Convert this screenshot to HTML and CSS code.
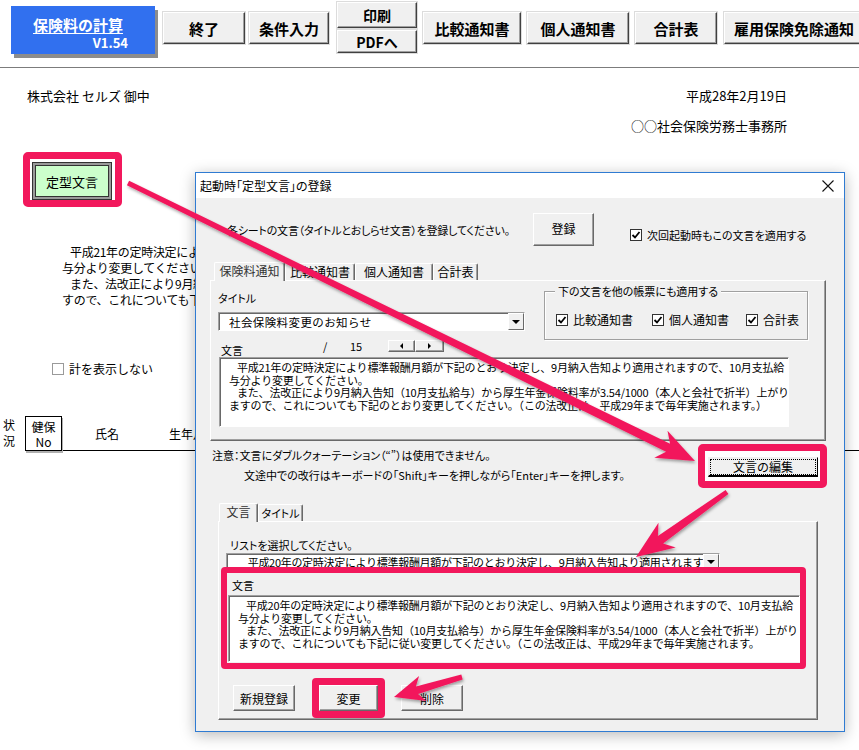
FILE: index.html
```html
<!DOCTYPE html>
<html lang="ja">
<head>
    <meta charset="UTF-8">
    <meta name="viewport" content="width=device-width, initial-scale=1.0">
    <title>保険料の計算</title>
    <link rel="stylesheet" href="styles.css">
</head>
<body>

    <!-- Sheet behind the dialog -->
    <div class="sheet">
        <div class="toolbar">
            <div class="calc-btn">
                <div class="calc-inner">
                    <div class="calc-title">保険料の計算</div>
                    <div class="calc-ver">V1.54</div>
                </div>
            </div>
            <button class="tool-btn w-end">終了</button>
            <button class="tool-btn w-cond">条件入力</button>
            <div class="print-stack">
                <button class="tool-btn print-top">印刷</button>
                <button class="tool-btn print-bottom">PDFへ</button>
            </div>
            <button class="tool-btn w-cmp">比較通知書</button>
            <button class="tool-btn w-ind">個人通知書</button>
            <button class="tool-btn w-sum">合計表</button>
            <button class="tool-btn w-emp">雇用保険免除通知</button>
        </div>

        <div class="letterhead">
            <div class="addressee">株式会社 セルズ 御中</div>
            <div class="sender">
                <div>平成28年2月19日</div>
                <div class="office">○○社会保険労務士事務所</div>
            </div>
        </div>

        <div class="hl-template"><button class="template-btn">定型文言</button></div>

        <div class="notice">
            <div class="ind">平成21年の定時決定により標準報酬月額が下記のとおり決定し、9月納入告知より適用されますので、10月支払給</div>
            <div>与分より変更してください。</div>
            <div class="ind">また、法改正により9月納入告知（10月支払給与）から厚生年金保険料率が3.54/1000（本人と会社で折半）上がりま</div>
            <div>すので、これについても下記のとおり変更してください。</div>
        </div>

        <label class="hide-total"><span class="cb cb-light"></span>計を表示しない</label>

        <div class="table-head">
            <div class="status">状<br>況</div>
            <div class="head-cols">
                <div class="no-box">健保<br>No</div>
                <div class="col-name">氏名</div>
                <div class="col-birth">生年月日</div>
            </div>
        </div>
    </div>

    <!-- Dialog window -->
    <div class="dialog">
        <div class="dlg-title">
            <span>起動時「定型文言」の登録</span>
            <svg class="dlg-close" width="12" height="12" viewBox="0 0 12 12">
                <path d="M0.5 0.5 L11.5 11.5 M11.5 0.5 L0.5 11.5" stroke="#111" stroke-width="1.1" fill="none"/>
            </svg>
        </div>

        <div class="intro">
            <span class="intro-text">各シートの文言（タイトルとおしらせ文言）を登録してください。</span>
            <button class="win-btn reg-btn">登録</button>
            <label class="chk next-run"><span class="cb"><svg viewBox="0 0 10 10"><path d="M1.5 5 L4 7.5 L8.5 2" stroke="#000" stroke-width="1.8" fill="none"/></svg></span>次回起動時もこの文言を適用する</label>
        </div>

        <div class="tab-row tabs1">
            <span class="tab active t-ins">保険料通知</span>
            <span class="tab t-cmp">比較通知書</span>
            <span class="tab t-ind">個人通知書</span>
            <span class="tab t-sum">合計表</span>
        </div>
        <div class="panel panel1">
            <div class="p1-top">
                <div class="title-col">
                    <div class="lbl">タイトル</div>
                    <div class="combo combo1"><span class="combo-text">社会保険料変更のお知らせ</span><span class="drop"><i></i></span></div>
                </div>
                <div class="group">
                    <div class="group-title">下の文言を他の帳票にも適用する</div>
                    <div class="group-opts">
                        <label class="chk o1"><span class="cb"><svg viewBox="0 0 10 10"><path d="M1.5 5 L4 7.5 L8.5 2" stroke="#000" stroke-width="1.8" fill="none"/></svg></span>比較通知書</label>
                        <label class="chk o2"><span class="cb"><svg viewBox="0 0 10 10"><path d="M1.5 5 L4 7.5 L8.5 2" stroke="#000" stroke-width="1.8" fill="none"/></svg></span>個人通知書</label>
                        <label class="chk"><span class="cb"><svg viewBox="0 0 10 10"><path d="M1.5 5 L4 7.5 L8.5 2" stroke="#000" stroke-width="1.8" fill="none"/></svg></span>合計表</label>
                    </div>
                </div>
            </div>
            <div class="p1-mid">
                <span class="lbl mid-lbl">文言</span>
                <span class="mid-num">/</span>
                <span class="mid-num">15</span>
                <span class="spin"><span class="spin-btn sb-l"><i class="tri-l"></i></span><span class="spin-btn sb-r"><i class="tri-r"></i></span></span>
            </div>
            <div class="textbox tb1">
                <div class="ind">平成21年の定時決定により標準報酬月額が下記のとおり決定し、9月納入告知より適用されますので、10月支払給</div>
                <div>与分より変更してください。</div>
                <div class="ind">また、法改正により9月納入告知（10月支払給与）から厚生年金保険料率が3.54/1000（本人と会社で折半）上がり</div>
                <div>ますので、これについても下記のとおり変更してください。（この法改正は、平成29年まで毎年実施されます。）</div>
            </div>
        </div>

        <div class="notes">
            <div class="notes-text">
                <div>注意：文言にダブルクォーテーション（“”）は使用できません。</div>
                <div class="notes-2">文途中での改行はキーボードの「Shift」キーを押しながら「Enter」キーを押します。</div>
            </div>
            <div class="hl-edit"><button class="edit-btn">文言の編集</button></div>
        </div>

        <div class="tab-row tabs2">
            <span class="tab active t-text">文言</span>
            <span class="tab t-title">タイトル</span>
        </div>
        <div class="panel panel2">
            <div class="lbl p2-lbl">リストを選択してください。</div>
            <div class="combo combo2"><span class="combo-text">　平成20年の定時決定により標準報酬月額が下記のとおり決定し、9月納入告知より適用されます</span><span class="drop"><i></i></span></div>
            <div class="hl-text">
                <div class="lbl">文言</div>
                <div class="textbox tb2">
                    <div class="ind">平成20年の定時決定により標準報酬月額が下記のとおり決定し、9月納入告知より適用されますので、10月支払給</div>
                    <div>与分より変更してください。</div>
                    <div class="ind">また、法改正により9月納入告知（10月支払給与）から厚生年金保険料率が3.54/1000（本人と会社で折半）上がり</div>
                    <div>ますので、これについても下記に従い変更してください。（この法改正は、平成29年まで毎年実施されます。</div>
                </div>
            </div>
            <div class="p2-btns">
                <button class="win-btn b-new">新規登録</button>
                <div class="hl-change"><button class="win-btn b-change">変更</button></div>
                <button class="win-btn b-del">削除</button>
            </div>
        </div>
    </div>

    <!-- Callout arrows drawn over everything -->
    <svg class="arrows" width="859" height="750" viewBox="0 0 859 750">
        <defs>
            <filter id="arrowShadow" x="-5%" y="-5%" width="110%" height="110%">
                <feDropShadow dx="1" dy="2" stdDeviation="1.5" flood-color="#000" flood-opacity="0.35"/>
            </filter>
        </defs>
        <g fill="#f2185c" filter="url(#arrowShadow)">
            <polygon points="129.1,180.8 670.1,443.8 667.5,430.8 695,461 654.3,457.8 666.1,451.8 126.9,185.2"/>
            <polygon points="725.6,489.9 657.9,536.0 658.5,522.8 636,557 675.7,547.4 663.1,543.4 728.4,494.1"/>
            <polygon points="461.3,674.6 415.9,686.4 419.1,676.0 394,697 426.5,701.0 418.1,694.0 462.7,679.4"/>
        </g>
    </svg>

</body>
</html>
```

FILE: styles.css
```css
* {
    box-sizing: border-box;
}

body {
    margin: 0;
    width: 859px;
    height: 750px;
    overflow: hidden;
    position: relative;
    background: #fff;
    color: #000;
    font-family: "Noto Sans CJK JP", sans-serif;
    font-size: 12px;
}

button {
    font-family: inherit;
    color: #000;
    margin: 0;
    padding: 0;
}

/* ---------- toolbar ---------- */

.toolbar {
    display: flex;
    align-items: flex-start;
    height: 68px;
    padding-left: 11px;
    border-bottom: 1px solid #7c7c7c;
    overflow: hidden;
}

.calc-btn {
    flex-shrink: 0;
    margin-top: 6px;
    width: 144px;
    height: 48px;
    padding: 9px 0 0 22px;
    background: #3170ef;
    box-shadow: 3px 4px 0 #8c8c8c;
    color: #fff;
    font-weight: bold;
}

.calc-inner {
    width: 95px;
    text-align: right;
}

.calc-title {
    text-align: left;
    font-size: 15px;
    line-height: 19px;
    text-decoration: underline;
    text-underline-offset: 2px;
}

.calc-ver {
    font-size: 13px;
    line-height: 17px;
}

.tool-btn {
    flex-shrink: 0;
    height: 32px;
    margin-top: 12px;
    background: #f0f0f0;
    border: 1px solid;
    border-color: #fff #404040 #404040 #fff;
    box-shadow: inset -1px -1px #a0a0a0, 0 0 0 1px #dcdcdc;
    font-size: 15px;
    font-weight: bold;
}

.w-end  { margin-left: 8px; width: 82px; }
.w-cond { margin-left: 4px; width: 80px; }
.w-cmp  { margin-left: 6px; width: 98px; }
.w-ind  { margin-left: 6px; width: 102px; }
.w-sum  { margin-left: 6px; width: 82px; }
.w-emp  { margin-left: 7px; width: 140px; }

.print-stack {
    flex-shrink: 0;
    display: flex;
    flex-direction: column;
    margin: 2px 0 0 8px;
    width: 80px;
}

.print-stack .tool-btn {
    margin-top: 0;
    width: 80px;
    font-size: 14px;
}

.print-top { height: 26px; }
.print-bottom { height: 23px; margin-top: 2px !important; }

/* ---------- sheet body ---------- */

.letterhead {
    display: flex;
    justify-content: space-between;
    margin-top: 20px;
    padding: 0 72px 0 27px;
    font-size: 13px;
    line-height: 16px;
}

.sender {
    text-align: right;
}

.office {
    margin-top: 14px;
}

.hl-template {
    width: 99px;
    margin: 18px 0 0 23px;
    padding: 3px 2px 0;
    border: 7px solid #f2185c;
    border-radius: 5px;
    background: #fff;
}

.template-btn {
    display: block;
    width: 80px;
    height: 38px;
    background: #ccffcc;
    border: 1px solid #333;
    box-shadow: inset 0 0 0 2px #9a9a9a, inset 0 0 0 3px #333;
    font-size: 13px;
}

.notice {
    margin: 37px 0 0 62px;
    white-space: nowrap;
    font-size: 12px;
    line-height: 16px;
    letter-spacing: -0.3px;
}

.notice .ind {
    padding-left: 8px;
}

.hide-total {
    display: flex;
    align-items: center;
    gap: 5px;
    margin: 54px 0 0 52px;
    line-height: 14px;
}

.cb {
    flex-shrink: 0;
    width: 12px;
    height: 12px;
    padding: 0;
    border: 1px solid #333;
    background: #fff;
    display: flex;
}

.cb svg {
    width: 10px;
    height: 10px;
}

.cb-light {
    border-color: #9a9a9a;
}

.table-head {
    display: flex;
    margin-top: 40px;
    padding-left: 3px;
}

.status {
    width: 22px;
    padding-top: 1px;
    line-height: 16px;
}

.head-cols {
    flex: 1;
    display: flex;
    align-items: center;
    height: 35px;
    border-bottom: 1px solid #000;
}

.no-box {
    width: 37px;
    height: 35px;
    border: 1px solid #000;
    box-shadow: 1px 2px 0 #b0b0b0;
    text-align: center;
    line-height: 15px;
    padding-top: 2px;
}

.col-name  { margin-left: 33px; padding-top: 1px; }
.col-birth { margin-left: 50px; padding-top: 1px; }

/* ---------- dialog ---------- */

.dialog {
    position: absolute;
    left: 195px;
    top: 172px;
    width: 650px;
    height: 560px;
    border: 1px solid #2f7bd2;
    background: #f0f0f0;
    box-shadow: 0 3px 14px rgba(0, 0, 0, 0.28);
    font-feature-settings: "palt";
    font-size: 11px;
    z-index: 5;
}

.dlg-title {
    display: flex;
    align-items: center;
    justify-content: space-between;
    height: 25px;
    padding: 0 10px 0 4px;
    background: #fff;
    font-size: 12px;
}

.intro {
    display: flex;
    align-items: flex-start;
    height: 33px;
    margin-top: 15px;
}

.intro-text {
    width: 306px;
    margin: 9px 0 0 31px;
    line-height: 16px;
    white-space: nowrap;
    letter-spacing: -0.2px;
}

.win-btn {
    background: #f0f0f0;
    border: 1px solid;
    border-color: #fff #696969 #696969 #fff;
    box-shadow: inset -1px -1px #a0a0a0;
    font-size: 12px;
}

.reg-btn {
    width: 61px;
    height: 33px;
    padding-bottom: 3px;
}

.chk {
    display: flex;
    align-items: center;
    gap: 5px;
    line-height: 16px;
    white-space: nowrap;
}

.next-run {
    margin: 14px 0 0 36px;
}

.tab-row {
    display: flex;
    align-items: flex-end;
    height: 18px;
    position: relative;
    z-index: 1;
}

.tabs1 {
    margin: 16px 0 0 18px;
}

.tabs2 {
    margin: 15px 0 0 23px;
}

.tab {
    height: 17px;
    line-height: 16px;
    text-align: center;
    white-space: nowrap;
    font-size: 12px;
    background: #f0f0f0;
    border-left: 1px solid #fff;
    border-top: 1px solid #fff;
    border-right: 1px solid #696969;
    box-shadow: inset -1px 0 #a0a0a0;
    border-radius: 2px 2px 0 0;
}

.tab.active {
    height: 19px;
    margin-bottom: -1px;
    color: #333;
}

.t-ins   { width: 71px; }
.t-cmp   { width: 70px; }
.t-ind   { width: 78px; }
.t-sum   { width: 45px; }
.t-text  { width: 39px; }
.t-title { width: 45px; font-size: 11px; }

.panel {
    border: 1px solid;
    border-color: #fff #696969 #696969 #fff;
    box-shadow: inset -1px -1px #a0a0a0;
}

.panel1 {
    margin-left: 14px;
    width: 616px;
    height: 161px;
}

.p1-top {
    display: flex;
    height: 59px;
}

.title-col {
    width: 307px;
    margin-left: 7px;
    padding-top: 9px;
}

.lbl {
    line-height: 16px;
    white-space: nowrap;
}

.combo {
    display: flex;
    align-items: center;
    background: #fff;
    border: 1px solid;
    border-color: #a0a0a0 #fff #fff #a0a0a0;
    box-shadow: inset 1px 1px #696969;
    overflow: hidden;
    white-space: nowrap;
    font-feature-settings: normal;
    font-size: 11px;
}

.combo-text {
    flex: 1;
    overflow: hidden;
}

.drop {
    flex-shrink: 0;
    width: 16px;
    height: 100%;
    display: flex;
    align-items: center;
    justify-content: center;
    background: #f0f0f0;
    border: 1px solid;
    border-color: #fff #696969 #696969 #fff;
}

.drop i {
    width: 0;
    height: 0;
    border-left: 4px solid transparent;
    border-right: 4px solid transparent;
    border-top: 4px solid #000;
}

.combo1 {
    margin-top: 6px;
    height: 19px;
    padding-left: 10px;
}

.combo1 .combo-text {
    letter-spacing: 0.4px;
    font-size: 11.5px;
}

.group {
    margin: 10px 0 0 19px;
    width: 264px;
    height: 49px;
    border: 1px solid #a0a0a0;
    box-shadow: inset 1px 1px #fff, 1px 1px #fff;
}

.group-title {
    width: fit-content;
    height: 16px;
    margin: -9px 0 0 10px;
    padding: 0 3px;
    background: #f0f0f0;
    line-height: 16px;
    white-space: nowrap;
}

.group-opts {
    display: flex;
    margin: 13px 0 0 11px;
    font-size: 12px;
}

.group-opts .o1 { width: 96px; }
.group-opts .o2 { width: 94px; }

.p1-mid {
    display: grid;
    grid-template-columns: 102px 27px 38px 56px;
    height: 17px;
    padding-left: 10px;
}

.mid-lbl {
    margin-top: 2px;
}

.mid-num {
    margin-top: -2px;
    line-height: 16px;
    font-feature-settings: normal;
}

.spin {
    display: flex;
    height: 12px;
}

.spin-btn {
    display: flex;
    align-items: center;
    justify-content: center;
    height: 12px;
    background: #f0f0f0;
    border: 1px solid;
    border-color: #fff #696969 #696969 #fff;
    box-shadow: inset -1px -1px #a0a0a0;
}

.sb-l { width: 27px; }
.sb-r { width: 29px; }

.tri-l {
    border-top: 3px solid transparent;
    border-bottom: 3px solid transparent;
    border-right: 3px solid #000;
}

.tri-r {
    border-top: 3px solid transparent;
    border-bottom: 3px solid transparent;
    border-left: 3px solid #000;
}

.textbox {
    background: #fff;
    border: 1px solid;
    border-color: #a0a0a0 #fff #fff #a0a0a0;
    box-shadow: inset 1px 1px #696969;
    padding: 3px 0 0 9px;
    overflow: hidden;
    white-space: nowrap;
    font-size: 11px;
    line-height: 12.5px;
    letter-spacing: -0.2px;
    font-feature-settings: normal;
}

.textbox .ind {
    padding-left: 8px;
}

.tb1 {
    margin-left: 8px;
    width: 570px;
    height: 70px;
}

.notes {
    display: flex;
    height: 44px;
    margin-top: 3px;
}

.notes-text {
    width: 486px;
    margin: 1px 0 0 16px;
    line-height: 20px;
    white-space: nowrap;
}

.notes-2 {
    padding-left: 32px;
}

.hl-edit {
    width: 129px;
    height: 44px;
    padding: 6px 2px 4px 3px;
    border: 7px solid #f2185c;
    border-radius: 5px;
    background: #fff;
}

.edit-btn {
    display: block;
    width: 110px;
    height: 20px;
    background: #f0f0f0;
    border: 1px solid;
    border-color: #f0f0f0 #000 #000 #f0f0f0;
    border-bottom-width: 2px;
    outline: 1px dotted #000;
    outline-offset: -3px;
    font-size: 12px;
    line-height: 14px;
}

.panel2 {
    margin-left: 22px;
    width: 600px;
    height: 199px;
}

.p2-lbl {
    padding-top: 15px;
    margin-left: 11px;
}

.combo2 {
    margin-left: 7px;
    width: 494px;
    height: 18px;
    padding-left: 10px;
}

.combo2 .combo-text {
    letter-spacing: -0.3px;
}

.hl-text {
    position: relative;
    width: 585px;
    margin: -4px 0 0 2px;
    padding: 4px 0 1px 1px;
    border: 6px solid #f2185c;
    border-radius: 4px;
}

.hl-text .lbl {
    margin-left: 4px;
}

.tb2 {
    margin-top: 2px;
    width: 572px;
    height: 67px;
}

.p2-btns {
    display: flex;
    align-items: center;
    height: 26px;
    margin-top: 16px;
}

.p2-btns .win-btn {
    height: 26px;
}

.b-new { margin-left: 14px; width: 62px; }
.b-change { width: 59px; display: block; }
.b-del { margin-left: 16px; width: 62px; }

.hl-change {
    margin: -7px 0 -7px 17px;
    border: 7px solid #f2185c;
    border-radius: 4px;
}

/* ---------- callout arrows ---------- */

.arrows {
    position: absolute;
    left: 0;
    top: 0;
    z-index: 10;
    pointer-events: none;
}
```
